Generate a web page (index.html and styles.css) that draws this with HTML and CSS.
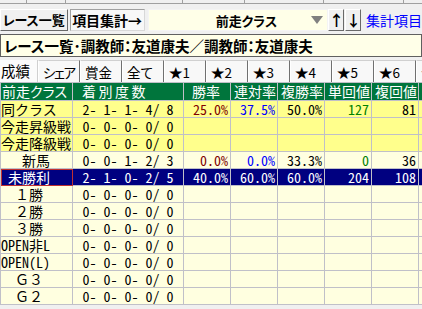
FILE: index.html
```html
<!DOCTYPE html>
<html lang="ja">
<head>
  <meta charset="UTF-8" />
  <title>レース一覧</title>
  <link rel="stylesheet" href="styles.css">
</head>
<body>
  <div class="strip">
    <span class="c1"></span><span class="c2"></span><span class="c3"></span><span class="c4"></span><span class="c5"></span><span class="c6"></span>
  </div>

  <div class="toolbar">
    <button class="btn btn-list">レース一覧</button>
    <button class="btn btn-sum">項目集計→</button>
    <div class="combo">
      <span class="combo-text">前走クラス</span>
      <span class="combo-arrow"></span>
    </div>
    <button class="btn btn-arrow">↑</button>
    <button class="btn btn-arrow">↓</button>
    <span class="link">集計項目</span>
  </div>

  <div class="title">レース一覧･調教師：友道康夫／調教師：友道康夫</div>

  <div class="tabs">
    <span class="tab active">成績</span>
    <span class="tab narrow">シェア</span>
    <span class="tab">賞金</span>
    <span class="tab">全て</span>
    <span class="tab">★1</span>
    <span class="tab">★2</span>
    <span class="tab">★3</span>
    <span class="tab">★4</span>
    <span class="tab">★5</span>
    <span class="tab">★6</span>
    <span class="tab">★7</span>
  </div>

  <div class="grid">
    <table>
      <colgroup>
        <col class="w-class"><col class="w-rec"><col class="w-num"><col class="w-num"><col class="w-num"><col class="w-num"><col class="w-num"><col class="w-num">
      </colgroup>
      <thead>
        <tr>
          <th>前走クラス</th>
          <th class="wide">着別度数</th>
          <th class="indent">勝率</th>
          <th>連対率</th>
          <th>複勝率</th>
          <th>単回値</th>
          <th>複回値</th>
          <th>単勝</th>
        </tr>
      </thead>
      <tbody>
        <tr class="hi">
          <td>同クラス</td><td class="rec">2- 1- 1- 4/ 8</td>
          <td class="n win">25.0%</td><td class="n ren">37.5%</td><td class="n">50.0%</td><td class="n ret">127</td><td class="n">81</td><td></td>
        </tr>
        <tr class="hi">
          <td>今走昇級戦</td><td class="rec">0- 0- 0- 0/ 0</td>
          <td></td><td></td><td></td><td></td><td></td><td></td>
        </tr>
        <tr class="hi">
          <td>今走降級戦</td><td class="rec">0- 0- 0- 0/ 0</td>
          <td></td><td></td><td></td><td></td><td></td><td></td>
        </tr>
        <tr>
          <td>　&ensp;新馬</td><td class="rec">0- 0- 1- 2/ 3</td>
          <td class="n win">0.0%</td><td class="n ren">0.0%</td><td class="n">33.3%</td><td class="n ret">0</td><td class="n">36</td><td></td>
        </tr>
        <tr class="sel">
          <td class="focus">&ensp;未勝利</td><td class="rec">2- 1- 0- 2/ 5</td>
          <td class="n">40.0%</td><td class="n">60.0%</td><td class="n">60.0%</td><td class="n">204</td><td class="n">108</td><td></td>
        </tr>
        <tr>
          <td>　１勝</td><td class="rec">0- 0- 0- 0/ 0</td>
          <td></td><td></td><td></td><td></td><td></td><td></td>
        </tr>
        <tr>
          <td>　２勝</td><td class="rec">0- 0- 0- 0/ 0</td>
          <td></td><td></td><td></td><td></td><td></td><td></td>
        </tr>
        <tr>
          <td>　３勝</td><td class="rec">0- 0- 0- 0/ 0</td>
          <td></td><td></td><td></td><td></td><td></td><td></td>
        </tr>
        <tr>
          <td><span class="hw">OPEN</span>非<span class="hw">L</span></td><td class="rec">0- 0- 0- 0/ 0</td>
          <td></td><td></td><td></td><td></td><td></td><td></td>
        </tr>
        <tr>
          <td><span class="hw">OPEN(L)</span></td><td class="rec">0- 0- 0- 0/ 0</td>
          <td></td><td></td><td></td><td></td><td></td><td></td>
        </tr>
        <tr>
          <td>　Ｇ３</td><td class="rec">0- 0- 0- 0/ 0</td>
          <td></td><td></td><td></td><td></td><td></td><td></td>
        </tr>
        <tr>
          <td>　Ｇ２</td><td class="rec">0- 0- 0- 0/ 0</td>
          <td></td><td></td><td></td><td></td><td></td><td></td>
        </tr>
      </tbody>
    </table>
  </div>

  <div class="hscroll"><span class="thumb"></span></div>
</body>
</html>
```

FILE: styles.css
```css
body {
  margin: 0;
  width: 422px;
  height: 309px;
  overflow: hidden;
  background-color: #f0f0f0;
  font-family: "Noto Sans CJK JP", sans-serif;
  font-size: 14px;
  color: #000;
}

.strip {
  display: flex;
  height: 3px;
  border-bottom: 1px solid #a0a0a0;
}

.strip span {
  border-right: 1px solid #a0a0a0;
}

.strip .c1 { width: 26px; }
.strip .c2 { width: 38px; }
.strip .c3 { width: 116px; }
.strip .c4 { width: 61px; }
.strip .c5 { width: 78px; }
.strip .c6 { width: 79px; }

.toolbar {
  display: flex;
  align-items: center;
  height: 22px;
  margin-top: 5px;
}

.btn {
  height: 22px;
  padding: 0;
  margin: 0;
  font-family: inherit;
  font-weight: bold;
  font-size: 14px;
  line-height: 18px;
  white-space: nowrap;
  background-color: #f0f0f0;
  border: 1px solid;
  border-color: #fff #696969 #696969 #fff;
  box-sizing: border-box;
  font-feature-settings: "palt" 1;
}

.btn-list {
  width: 70px;
  font-size: 13px;
}

.btn-sum {
  width: 78px;
  margin-left: 2px;
  background-color: #f8f8f8;
  border-color: #a0a0a0 #d8d8d8 #d8d8d8 #a0a0a0;
}

.combo {
  display: flex;
  align-items: center;
  width: 187px;
  height: 22px;
  margin-left: 3px;
  background-color: #ffffe8;
  box-sizing: border-box;
  border: 1px solid #f4f4f4;
}

.combo-text {
  flex: 1;
  padding-left: 67px;
  font-weight: bold;
  font-size: 13px;
  font-feature-settings: "palt" 1;
}

.combo-arrow {
  width: 0;
  height: 0;
  margin-right: 4px;
  border-left: 6px solid transparent;
  border-right: 6px solid transparent;
  border-top: 8px solid #808080;
}

.btn-arrow {
  width: 16px;
  font-size: 15px;
  line-height: 18px;
}

.btn-arrow:first-of-type {
  margin-left: 4px;
}

.btn-arrow + .btn-arrow {
  margin-left: 1px;
}

.link {
  margin-left: 5px;
  color: #0000ff;
  white-space: nowrap;
  font-size: 14px;
}

.title {
  height: 23px;
  margin-top: 3px;
  padding-left: 3px;
  background-color: #ffffe8;
  border: 1px solid #606060;
  box-sizing: border-box;
  font-weight: bold;
  font-size: 14.5px;
  line-height: 21px;
  white-space: nowrap;
  font-feature-settings: "palt" 1;
}

.tabs {
  display: flex;
  height: 22px;
  margin-top: 3px;
  white-space: nowrap;
}

.tab {
  flex: none;
  width: 42px;
  box-sizing: border-box;
  padding-left: 4px;
  line-height: 22px;
  font-size: 13.5px;
  background-color: #f8f8f8;
  border-top: 1px solid #d0d0d0;
  border-left: 1px solid #fff;
  border-right: 1px solid #707070;
  font-feature-settings: "palt" 1;
}

.tab.narrow {
  letter-spacing: -1.5px;
}

.tab.active {
  width: 38px;
  padding-left: 1px;
  border-top: none;
  border-left: none;
  border-right: 1px solid #d0d0d0;
  background-color: #fbfbfb;
  font-size: 14.5px;
}

.grid {
  width: 422px;
  overflow: hidden;
}

table {
  width: 460px;
  table-layout: fixed;
  border-collapse: collapse;
  white-space: pre;
}

.w-class { width: 72px; }
.w-rec { width: 111px; }
.w-num { width: 47px; }

th, td {
  padding: 0;
  border: 1px solid #c0c0c8;
  overflow: hidden;
}

th {
  height: 17px;
  line-height: 17px;
  text-align: left;
  padding-left: 3px;
  font-weight: normal;
  font-size: 14px;
  color: #fff;
  background-color: #00753c;
  font-feature-settings: "palt" 1;
}

th:first-child {
  padding-left: 1px;
}

th.wide {
  padding-left: 9px;
  letter-spacing: 2.5px;
}

th.indent {
  padding-left: 8px;
}

td {
  height: 16px;
  line-height: 16px;
  font-size: 14px;
  background-color: #ffffe0;
}

.hw,
td.rec,
td.n {
  font-feature-settings: "hwid" 1;
}

tr.hi td {
  background-color: #ffff8c;
}

tr.sel td {
  background-color: #000080;
  color: #fff;
}

td.focus {
  outline: 1px solid #c03030;
  outline-offset: -1px;
}

td.rec {
  text-align: center;
}

td.n {
  text-align: right;
  padding-right: 2px;
}

td.win { color: #800000; }
td.ren { color: #0000ff; }
td.ret { color: #008000; }

.hscroll {
  position: relative;
  height: 6px;
}

.hscroll .thumb {
  position: absolute;
  left: 4px;
  top: 4px;
  width: 320px;
  height: 6px;
  background-color: #fafafa;
  border-right: 1px solid #a0a0a0;
}
```
